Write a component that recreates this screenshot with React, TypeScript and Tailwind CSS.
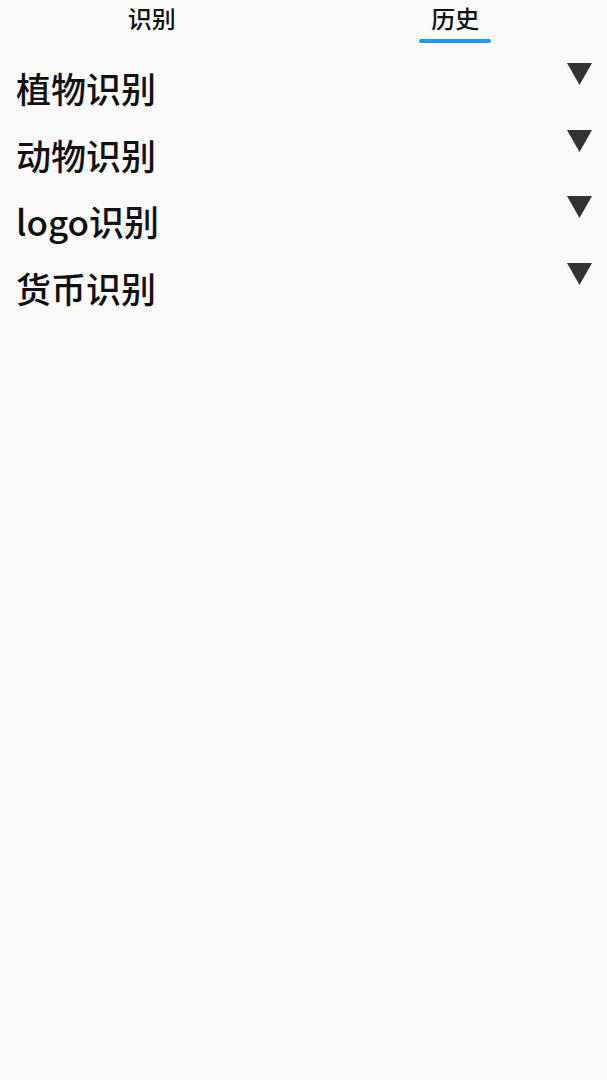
import React from "react";

const items = ["植物识别", "动物识别", "logo识别", "货币识别"];

export default function App() {
  return (
    <div
      className="w-[607px] h-[1080px] bg-[#fafafa] text-black"
      style={{ fontFamily: '"Noto Sans CJK SC", "Noto Sans", sans-serif' }}
    >
      <div className="flex h-[44px]">
        <div className="flex-1 flex flex-col items-center pt-[6px]">
          <span className="text-[24px] leading-[24px] font-medium text-[#111]">识别</span>
        </div>
        <div className="flex-1 flex flex-col items-center pt-[6px]">
          <span className="text-[24px] leading-[24px] font-medium text-[#111]">历史</span>
          <div className="mt-[9px] h-[4px] w-[72px] rounded-full bg-[#2196f3]" />
        </div>
      </div>
      <div className="flex flex-col">
        {items.map((t) => (
          <div key={t} className="flex justify-between h-[66.67px] pl-[16px] pr-[15px]">
            <span className="mt-[26px] text-[35px] leading-[35px] font-medium text-[#111]">{t}</span>
            <svg className="mt-[19px]" width="25" height="22" viewBox="0 0 25 22">
              <polygon points="0,0 25,0 12.5,22" fill="#333333" />
            </svg>
          </div>
        ))}
      </div>
    </div>
  );
}
